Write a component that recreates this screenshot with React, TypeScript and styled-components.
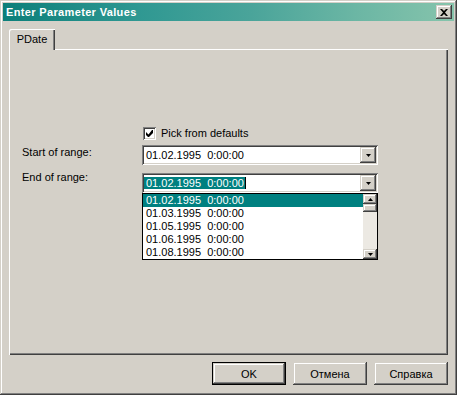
import styled, { createGlobalStyle } from "styled-components"

const face = "#d4d0c8"
const teal = "#008080"

const GlobalStyle = createGlobalStyle`
  html, body {
    margin: 0;
    padding: 0;
    background: ${face};
  }
  body {
    font-family: "Liberation Sans", Arial, sans-serif;
    font-size: 11px;
    color: #000;
  }
`

const raised = `
  box-shadow:
    inset -1px -1px #404040,
    inset 1px 1px ${face},
    inset -2px -2px #808080,
    inset 2px 2px #ffffff;
`

const sunken = `
  box-shadow:
    inset 1px 1px #808080,
    inset -1px -1px #ffffff,
    inset 2px 2px #404040,
    inset -2px -2px ${face};
`

const Window = styled.div`
  width: 457px;
  height: 395px;
  box-sizing: border-box;
  padding: 3px;
  display: flex;
  flex-direction: column;
  background: ${face};
  ${raised}
`

const TitleBar = styled.div`
  height: 18px;
  display: flex;
  align-items: center;
  justify-content: space-between;
  padding: 0 2px 0 3px;
  background: linear-gradient(90deg, #0c7f7a 0%, #2f9892 30%, #4aa49a 55%, #6bb6a4 78%, #86c4ac 100%);
  color: #fff;
  font-weight: bold;
  font-size: 11px;
  letter-spacing: 0.35px;
`

const CloseButton = styled.div`
  width: 16px;
  height: 14px;
  display: flex;
  align-items: center;
  justify-content: center;
  background: ${face};
  ${raised}
`

const Body = styled.div`
  flex: 1;
  display: flex;
  flex-direction: column;
  padding: 8px 6px 0 6px;
`

const TabStrip = styled.div`
  display: flex;
  height: 20px;
`

// the active tab overlaps the panel's top edge by one pixel
const Tab = styled.div`
  position: relative;
  z-index: 1;
  width: 46px;
  height: 21px;
  box-sizing: border-box;
  display: flex;
  align-items: center;
  justify-content: center;
  padding-bottom: 1px;
  background: ${face};
  border-top-left-radius: 2px;
  box-shadow:
    inset 1px 1px #ffffff,
    inset -1px 0 #404040,
    inset -2px 0 #808080;
`

const Panel = styled.div`
  height: 306px;
  box-sizing: border-box;
  padding: 78px 0 0 13px;
  box-shadow:
    inset 1px 1px #ffffff,
    inset -1px -1px #404040,
    inset -2px -2px #808080;
`

const Form = styled.div`
  display: grid;
  grid-template-columns: 120px 236px;
  grid-template-rows: 13px 20px 20px;
  row-gap: 5px;
`

const CheckRow = styled.label`
  grid-column: 2;
  display: flex;
  align-items: center;
  gap: 5px;
  padding-left: 1px;
  line-height: 13px;
`

const CheckBox = styled.div`
  width: 13px;
  height: 13px;
  box-sizing: border-box;
  background: #fff;
  display: flex;
  align-items: center;
  justify-content: center;
  ${sunken}
`

const Label = styled.div<{ $offset: number }>`
  line-height: 13px;
  margin-top: ${(p) => p.$offset}px;
`

const Combo = styled.div<{ $gap?: number }>`
  position: relative;
  height: 20px;
  box-sizing: border-box;
  padding: 2px;
  display: flex;
  align-items: center;
  background: #fff;
  margin-top: ${(p) => p.$gap || 0}px;
  ${sunken}
`

const ComboText = styled.div`
  flex: 1;
  padding-left: 2px;
  white-space: pre;
  line-height: 13px;
`

const Selected = styled.span`
  background: ${teal};
  color: #fff;
  padding: 0 1px 0 2px;
  margin-left: -2px;
  border-right: 1px solid #000;
`

const DropButton = styled.div`
  width: 16px;
  height: 16px;
  display: flex;
  align-items: center;
  justify-content: center;
  background: ${face};
  ${raised}
`

const DropList = styled.div`
  position: absolute;
  top: 20px;
  left: 0;
  width: 236px;
  height: 67px;
  box-sizing: border-box;
  border: 1px solid #000;
  background: #fff;
  display: flex;
`

const Rows = styled.div`
  flex: 1;
`

const Row = styled.div<{ $active?: boolean }>`
  height: 13px;
  line-height: 13px;
  padding-left: 3px;
  white-space: pre;
  background: ${(p) => (p.$active ? teal : "#fff")};
  color: ${(p) => (p.$active ? "#fff" : "#000")};
`

const ScrollBar = styled.div`
  width: 14px;
  display: flex;
  flex-direction: column;
  background: #ece9e3;
`

const ScrollButton = styled.div`
  height: 10px;
  display: flex;
  align-items: center;
  justify-content: center;
  background: ${face};
  ${raised}
`

const Thumb = styled.div`
  height: 8px;
  background: ${face};
  ${raised}
`

const Track = styled.div`
  flex: 1;
`

const ButtonRow = styled.div`
  display: flex;
  justify-content: flex-end;
  gap: 7px;
  margin-top: 7px;
`

const Button = styled.div<{ $default?: boolean }>`
  width: 74px;
  height: 23px;
  box-sizing: border-box;
  display: flex;
  align-items: center;
  justify-content: center;
  background: ${face};
  border: ${(p) => (p.$default ? "1px solid #000" : "none")};
  ${raised}
`

const Arrow = ({ up }: { up?: boolean }) => (
  <svg width="5" height="3" viewBox="0 0 5 3">
    <polygon points={up ? "0,3 5,3 2.5,0" : "0,0 5,0 2.5,3"} fill="#000" />
  </svg>
)

const items = [
  "01.02.1995  0:00:00",
  "01.03.1995  0:00:00",
  "01.05.1995  0:00:00",
  "01.06.1995  0:00:00",
  "01.08.1995  0:00:00",
]

export default function App() {
  return (
    <>
      <GlobalStyle />
      <Window>
        <TitleBar>
          <span>Enter Parameter Values</span>
          <CloseButton>
            <svg width="8" height="7" viewBox="0 0 8 7">
              <path d="M0 0h2l2 2 2-2h2L5 3.5 8 7H6L4 5 2 7H0l3-3.5z" fill="#000" />
            </svg>
          </CloseButton>
        </TitleBar>
        <Body>
          <TabStrip>
            <Tab>PDate</Tab>
          </TabStrip>
          <Panel>
            <Form>
              <div />
              <CheckRow>
                <CheckBox>
                  <svg width="7" height="7" viewBox="0 0 7 7">
                    <path d="M6 0h1v3L3 7H2L0 5V2l2.5 2.5z" fill="#000" />
                  </svg>
                </CheckBox>
                Pick from defaults
              </CheckRow>
              <Label $offset={1}>Start of range:</Label>
              <Combo>
                <ComboText>01.02.1995  0:00:00</ComboText>
                <DropButton>
                  <Arrow />
                </DropButton>
              </Combo>
              <Label $offset={1}>End of range:</Label>
              <Combo $gap={3}>
                <ComboText>
                  <Selected>01.02.1995  0:00:00</Selected>
                </ComboText>
                <DropButton>
                  <Arrow />
                </DropButton>
                <DropList>
                  <Rows>
                    {items.map((t, i) => (
                      <Row key={t} $active={i === 0}>
                        {t}
                      </Row>
                    ))}
                  </Rows>
                  <ScrollBar>
                    <ScrollButton>
                      <Arrow up />
                    </ScrollButton>
                    <Thumb />
                    <Track />
                    <ScrollButton>
                      <Arrow />
                    </ScrollButton>
                  </ScrollBar>
                </DropList>
              </Combo>
            </Form>
          </Panel>
          <ButtonRow>
            <Button $default>OK</Button>
            <Button>Отмена</Button>
            <Button>Справка</Button>
          </ButtonRow>
        </Body>
      </Window>
    </>
  )
}
